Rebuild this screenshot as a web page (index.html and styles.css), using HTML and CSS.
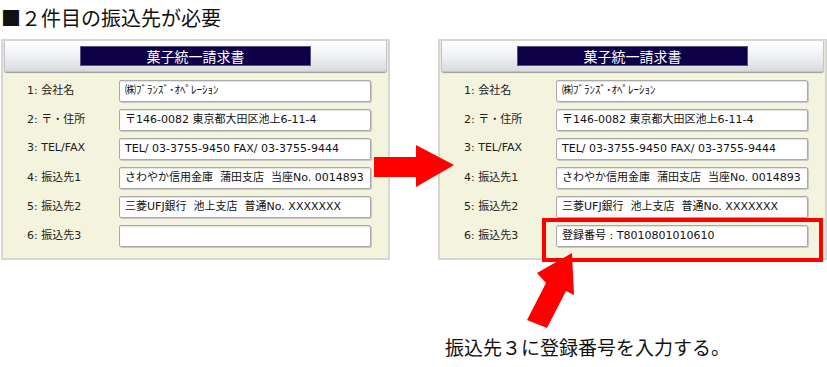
FILE: index.html
```html
<!DOCTYPE html>
<html lang="ja">

<head>
   <meta charset="UTF-8" />
   <meta name="viewport" content="width=device-width, initial-scale=1.0" />
   <title>2件目の振込先が必要</title>
   <link rel="stylesheet" href="styles.css">
</head>

<body>
   <h1 class="heading">■２件目の振込先が必要</h1>

   <div class="stage">
      <div class="panel">
         <div class="panel-head"><span class="panel-title">菓子統一請求書</span></div>
         <div class="rows">
            <div class="row"><span class="row-label">1: 会社名</span><span class="field">㈱ﾌﾞﾗﾝｽﾞ･ｵﾍﾟﾚｰｼｮﾝ</span></div>
            <div class="row"><span class="row-label">2: 〒・住所</span><span class="field">〒146-0082 東京都大田区池上6-11-4</span></div>
            <div class="row"><span class="row-label">3: TEL/FAX</span><span class="field">TEL/ 03-3755-9450 FAX/ 03-3755-9444</span></div>
            <div class="row"><span class="row-label">4: 振込先1</span><span class="field">さわやか信用金庫&nbsp; 蒲田支店&nbsp; 当座No. 0014893</span></div>
            <div class="row"><span class="row-label">5: 振込先2</span><span class="field">三菱UFJ銀行&nbsp; 池上支店&nbsp; 普通No. XXXXXXX</span></div>
            <div class="row"><span class="row-label">6: 振込先3</span><span class="field"></span></div>
         </div>
      </div>

      <div class="panel">
         <div class="panel-head"><span class="panel-title">菓子統一請求書</span></div>
         <div class="rows">
            <div class="row"><span class="row-label">1: 会社名</span><span class="field">㈱ﾌﾞﾗﾝｽﾞ･ｵﾍﾟﾚｰｼｮﾝ</span></div>
            <div class="row"><span class="row-label">2: 〒・住所</span><span class="field">〒146-0082 東京都大田区池上6-11-4</span></div>
            <div class="row"><span class="row-label">3: TEL/FAX</span><span class="field">TEL/ 03-3755-9450 FAX/ 03-3755-9444</span></div>
            <div class="row"><span class="row-label">4: 振込先1</span><span class="field">さわやか信用金庫&nbsp; 蒲田支店&nbsp; 当座No. 0014893</span></div>
            <div class="row"><span class="row-label">5: 振込先2</span><span class="field">三菱UFJ銀行&nbsp; 池上支店&nbsp; 普通No. XXXXXXX</span></div>
            <div class="row highlight"><span class="row-label">6: 振込先3</span><span class="field">登録番号 : T8010801010610</span></div>
         </div>
      </div>

      <!-- arrows drawn over the panels -->
      <svg class="arrow-right" width="82" height="46" viewBox="0 0 82 46">
         <polygon points="0,12 42,12 42,0 80,20 42,42 42,32 0,32" fill="#ff0000" />
      </svg>
      <svg class="arrow-up" width="50" height="80" viewBox="0 0 50 80">
         <polygon points="45,0 47,42 39,38 20,75 0,67 19,30 10,20" fill="#ff0000" />
      </svg>
   </div>

   <p class="note">振込先３に登録番号を入力する。</p>
</body>

</html>
```

FILE: styles.css
```css
* {
   margin: 0;
   padding: 0;
   box-sizing: border-box;
}

body {
   font-family: "Noto Sans CJK JP", "DejaVu Sans", sans-serif;
   background: #fff;
   color: #222;
   width: 827px;
   height: 367px;
   overflow: hidden;
}

.heading {
   height: 39px;
   padding: 5px 0 0 1px;
   font-size: 20px;
   font-weight: normal;
   line-height: 26px;
   color: #111;
}

.stage {
   position: relative;
   display: flex;
   gap: 48px;
   padding-left: 1px;
}

.panel {
   width: 389px;
   height: 221px;
   border: 2px solid #d6d6d6;
   background: #f4f3dd;
}

.panel-head {
   height: 31px;
   margin: 0 1px;
   display: flex;
   justify-content: center;
   align-items: center;
   background: linear-gradient(#ffffff, #f4f5f7 40%, #d9dbdf);
   border: 1px solid #c4c4c4;
   border-top: none;
   border-radius: 0 0 3px 3px;
   box-shadow: 0 1px 1px #9a9a9a;
}

.panel-title {
   width: 231px;
   height: 20px;
   background: #0e0048;
   border: 1px solid #55557a;
   color: #fff;
   font-size: 14px;
   line-height: 18px;
   text-align: center;
}

.rows {
   display: grid;
   gap: 7px;
   padding: 8px 0 0 24px;
}

.row {
   position: relative;
   display: flex;
   align-items: center;
}

.row-label {
   width: 92px;
   font-family: "DejaVu Sans", "Noto Sans CJK JP", sans-serif;
   font-size: 11px;
   color: #222;
   margin-top: -4px;
}

.field {
   width: 252px;
   height: 22px;
   padding: 0 5px;
   background: #fff;
   border: 1px solid #a9a9a9;
   border-radius: 2px;
   box-shadow: inset 0 1px 1px #e0e0e0, 1px 1px 0 #c8c8c8;
   font-family: "DejaVu Sans", "Noto Sans CJK JP", sans-serif;
   font-size: 11px;
   line-height: 20px;
   color: #111;
   white-space: nowrap;
   overflow: hidden;
}

.highlight::after {
   content: '';
   position: absolute;
   left: 78px;
   top: -7px;
   width: 273px;
   height: 36px;
   border: 4px solid #ff0000;
}

.arrow-right {
   position: absolute;
   left: 374px;
   top: 106px;
}

.arrow-up {
   position: absolute;
   left: 527px;
   top: 214px;
}

.note {
   padding: 75px 0 0 445px;
   font-size: 19px;
   line-height: 24px;
   color: #111;
}
```
